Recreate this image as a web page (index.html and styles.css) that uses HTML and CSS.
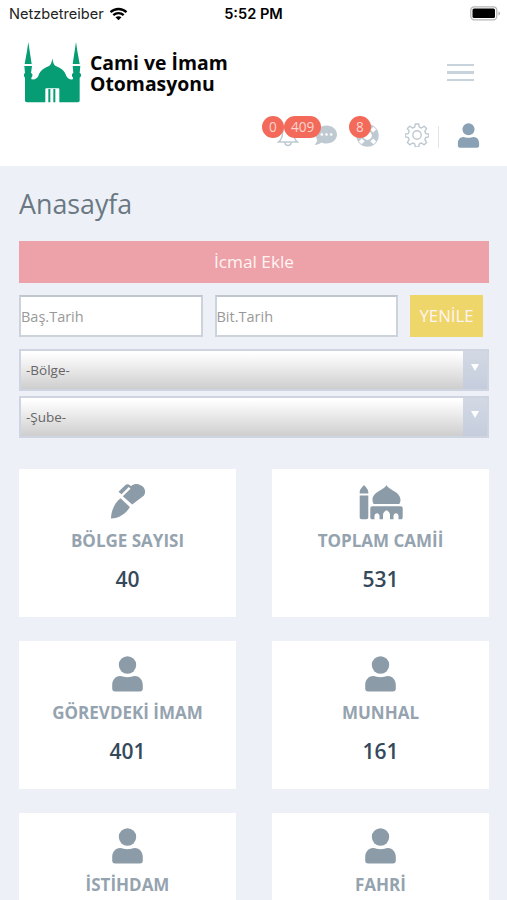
FILE: index.html
```html
<!DOCTYPE html>
<html lang="tr">
<head>
  <meta charset="UTF-8">
  <meta name="viewport" content="width=device-width, initial-scale=1.0">
  <title>Cami ve İmam Otomasyonu</title>
  <link rel="stylesheet" href="styles.css">
</head>
<body>
  <svg width="0" height="0" class="sprite">
    <symbol id="user" viewBox="0 0 31 36">
      <circle cx="15.5" cy="9" r="8.7"/>
      <path d="M8 20c3 0 4 1.300 7.500 1.300S20 20 23 20c4.500 0 7.800 4 7.800 9v3.500c0 2-1 3-3 3H3.200c-2 0-3-1-3-3V29c0-5 3.300-9 7.800-9z"/>
    </symbol>
  </svg>

  <header class="main-header">
    <div class="status-bar">
      <div class="carrier">
        <span>Netzbetreiber</span>
        <svg width="19" height="14" viewBox="0 0 19 14">
          <path d="M1.500 5.200C6 .9 13 .9 17.500 5.200M4.300 8.200c3-2.700 7.400-2.700 10.400 0" fill="none" stroke="#000" stroke-width="2.300"/>
          <path d="M6.500 10.300c1.800-1.500 4.200-1.500 6 0l-3 3z"/>
        </svg>
      </div>
      <span class="clock">5:52 PM</span>
      <svg class="battery" width="31" height="15" viewBox="0 0 31 15">
        <rect x=".8" y=".8" width="26" height="13" rx="3.500" fill="#fff" stroke="#b5b5b5" stroke-width="1.300"/>
        <rect x="2.500" y="2.600" width="22.500" height="9.500" rx="1.500"/>
        <path d="M28.500 5.200c2 .9 2 3.500 0 4.400z" fill="#aaa"/>
      </svg>
    </div>

    <div class="brand-row">
      <a class="brand">
        <svg width="57" height="61" viewBox="27 21 171 183" fill="#069d74">
          <path d="M40 21l4 27 6 39H29l7-39zM183 21l4 27 7 39h-21l6-39z"/>
          <path d="M28 93h23l-2 14-1 7 4 3v7l-3 4v5c10 2 17-3 21-10 5-17 19-24 32-30 6-3 8-10 10-23 2 13 4 20 10 23 14 6 27 13 32 30 4 7 11 12 20 10v-5l-3-4v-7l4-3-2-21h23l-2 21 4 3v7l-4 4v68c0 4-2 6-6 6h-55v-39c0-2-2-3-4-3H95c-2 0-4 1-4 3v39H36c-4 0-6-2-6-6v-68l-3-4v-7l3-3z"/>
          <path d="M100 162h6v40h-6zM115 162h6v40h-6z"/>
        </svg>
        <h1>Cami ve İmam<br>Otomasyonu</h1>
      </a>
      <div class="menu-toggler"><i></i><i></i><i></i></div>
    </div>

    <div class="top-menu">
      <div class="item bell">
        <svg width="22" height="23" viewBox="0 0 22 23" fill="none" stroke="#bec9d2" stroke-width="1.500">
          <path d="M1.500 18h19c-3-2.500-4-5-4-9 0-4-2-7-5.500-7S5.500 5 5.500 9c0 4-1 6.500-4 9zM8 18.500c0 4 6 4 6 0"/>
        </svg>
        <span class="badge">0</span>
      </div>
      <div class="item chat">
        <svg width="23" height="21" viewBox="0 0 23 21">
          <path d="M12.500.5C18.500.5 23 4.500 23 9.500s-4.500 9-10.500 9c-2 0-3.500-.3-5-1-2 1.500-4.500 2.500-7 2.500 1.500-1.500 2.500-3.500 2.700-5C2.300 13.300 2 11.500 2 9.500c0-5 4.500-9 10.500-9z" fill="#bec9d2"/>
          <g fill="#fff"><circle cx="7.800" cy="9.500" r="1.300"/><circle cx="12.500" cy="9.500" r="1.300"/><circle cx="17.200" cy="9.500" r="1.300"/></g>
        </svg>
        <span class="badge">409</span>
      </div>
      <div class="item support">
        <svg width="23" height="23" viewBox="0 0 23 23" fill="none">
          <circle cx="11.500" cy="11.500" r="7.800" stroke="#bec9d2" stroke-width="6.800"/>
          <path d="M4.200 4.200l3 3M15.800 15.800l3 3M18.800 4.200l-3 3M7.200 15.800l-3 3" stroke="#fff" stroke-width="4"/>
        </svg>
        <span class="badge">8</span>
      </div>
      <div class="item settings">
        <svg width="24" height="24" viewBox="0 0 24 24" fill="none" stroke="#bec9d2" stroke-width="1.400" stroke-linejoin="round">
          <path d="M10.300 1h3.400l.6 3.100 2.200.9 2.700-1.800 2.400 2.400-1.800 2.700.9 2.200 3.100.6v2.800l-3.100.6-.9 2.200 1.800 2.700-2.400 2.400-2.700-1.800-2.200.9-.6 3.100h-3.400l-.6-3.100-2.200-.9-2.700 1.800-2.400-2.400 1.800-2.700-.9-2.200-3.100-.6v-2.800l3.100-.6.9-2.200-1.800-2.700 2.400-2.400L7.500 5l2.200-.9z"/>
          <circle cx="12" cy="12" r="4.200"/>
        </svg>
      </div>
      <span class="separator"></span>
      <svg class="profile" width="23" height="25"><use href="#user"/></svg>
    </div>
  </header>

  <main class="page">
    <h2>Anasayfa</h2>
    <button class="btn btn-add">İcmal Ekle</button>

    <div class="dates">
      <input type="text" placeholder="Baş.Tarih">
      <input type="text" placeholder="Bit.Tarih">
      <button class="btn btn-refresh">YENİLE</button>
    </div>

    <div class="select"><span>-Bölge-</span><i class="arrow"></i></div>
    <div class="select"><span>-Şube-</span><i class="arrow"></i></div>

    <section class="cards">
      <div class="card">
        <svg width="36" height="36" viewBox="0 0 36 36">
          <path d="M10.500 14.300l9.300 8.600C17 29 9 34.500 1 34.500 1 27 5 18 10.500 14.300z"/>
          <path d="M12.800 12.200l7.700-7.400-1.700-1.700-7.300 7.200-3-2.500 6.700-6.500c1.500-1.300 3-1.400 4.500-.2l1.300 1.200c2.500-2.600 6-3 9-1.300 4.500 1.500 6.500 6 4 10.500L22.200 20.600z"/>
        </svg>
        <h3>BÖLGE SAYISI</h3>
        <p>40</p>
      </div>
      <div class="card">
        <svg width="44" height="36" viewBox="0 0 44 36">
          <path d="M5 1c1.500 2 4.300 4 4.300 7.200v1.300H.7V8.200C.7 5 3.500 3 5 1zM.7 11.500h8.600V33c0 1.500-.7 2.200-2 2.200H2.700c-1.300 0-2-.7-2-2.200z"/>
          <path d="M27.500 1c2 5 14 6.500 14 15 0 1.500-.5 3-1.300 4H14.800c-.8-1-1.300-2.500-1.300-4 0-8.500 12-10 14-15z"/>
          <path d="M13.500 22.200h28c1.500 0 2.200.8 2.200 2.200v8.800c0 1.400-.7 2-2.200 2h-2v-3c0-4-5-4-5 0v3h-3.500v-4c0-2.500-1.500-4-3.500-5-2 1-3.500 2.500-3.500 5v4h-3.500v-3c0-4-5-4-5 0v3h-2c-1.500 0-2.200-.6-2.200-2v-8.800c0-1.400.7-2.200 2.200-2.200z"/>
        </svg>
        <h3>TOPLAM CAMİİ</h3>
        <p>531</p>
      </div>
      <div class="card">
        <svg width="31" height="36"><use href="#user"/></svg>
        <h3>GÖREVDEKİ İMAM</h3>
        <p>401</p>
      </div>
      <div class="card">
        <svg width="31" height="36"><use href="#user"/></svg>
        <h3>MUNHAL</h3>
        <p>161</p>
      </div>
      <div class="card">
        <svg width="31" height="36"><use href="#user"/></svg>
        <h3>İSTİHDAM</h3>
      </div>
      <div class="card">
        <svg width="31" height="36"><use href="#user"/></svg>
        <h3>FAHRİ</h3>
      </div>
    </section>
  </main>
</body>
</html>
```
FILE: styles.css
```css
* {
  box-sizing: border-box;
}

body {
  margin: 0;
  height: 900px;
  overflow: hidden;
  background-color: #edf1f7;
  font-family: "Open Sans", sans-serif;
}

h1, h2, h3, p {
  margin: 0;
}

svg {
  display: block;
  flex-shrink: 0;
}

.sprite {
  position: absolute;
}

.main-header {
  height: 166px;
  background-color: #fff;
}

.status-bar {
  display: grid;
  grid-template-columns: 1fr auto 1fr;
  align-items: center;
  height: 27px;
  padding: 0 6px 0 9px;
  font-family: Inter, sans-serif;
  font-size: 14.6px;
  color: #222;
}

.carrier {
  display: flex;
  align-items: center;
  gap: 5px;
}

.clock {
  margin-left: -3px;
  font-weight: 600;
  color: #000;
}

.battery {
  justify-self: end;
}

.brand-row {
  display: flex;
  justify-content: space-between;
  align-items: center;
  height: 61px;
  margin-top: 15px;
  padding: 0 33px 0 24px;
}

.brand {
  display: flex;
  align-items: center;
  gap: 9px;
}

.brand h1 {
  padding-top: 1px;
  font-size: 19.4px;
  font-weight: 700;
  line-height: 21px;
  color: #050505;
}

.menu-toggler {
  display: flex;
  flex-direction: column;
  gap: 5px;
  width: 27px;
}

.menu-toggler i {
  height: 2.5px;
  background-color: #c7d2da;
}

.top-menu {
  display: flex;
  align-items: center;
  height: 26px;
  margin-top: 19px;
  padding-left: 277px;
}

.item {
  position: relative;
}

.chat {
  margin-left: 15px;
}

.support {
  margin-left: 19px;
}

.settings {
  margin-left: 26px;
}

.badge {
  position: absolute;
  top: -8px;
  left: -15px;
  min-width: 22px;
  height: 22px;
  padding: 0 7px;
  border-radius: 11px;
  background-color: #f36a5a;
  color: #fbd5cf;
  font-size: 13.6px;
  line-height: 21px;
  text-align: center;
}

.chat .badge {
  top: -9px;
  left: -30px;
}

.support .badge {
  left: -7px;
}

.separator {
  width: 1px;
  height: 22px;
  margin: 3px 18px 0 9px;
  background-color: #e0e5ea;
}

.profile {
  fill: #8aa0b5;
}

.page {
  padding: 19px 18px 0 19px;
}

.page h2 {
  margin-bottom: 18px;
  font-size: 26.8px;
  font-weight: 400;
  line-height: 38px;
  color: #697882;
}

.btn {
  height: 42px;
  padding: 0 0 1px;
  border: 0;
  font-family: inherit;
  font-size: 17.2px;
  color: #fff5f2;
}

.btn-add {
  display: block;
  width: 100%;
  background-color: #eda1a9;
}

.btn-refresh {
  width: 73px;
  font-size: 16.8px;
  background-color: #efd66b;
}

.dates {
  display: flex;
  gap: 12px;
  margin: 12px 0;
}

.dates input {
  width: 183.5px;
  height: 42px;
  padding: 0;
  border: 2px solid #cdd3db;
  border-top-color: #c0c6cd;
  border-radius: 0;
  background-color: #fff;
  font-family: inherit;
  font-size: 14.5px;
}

.dates input::placeholder {
  color: #999;
}

.select {
  display: flex;
  justify-content: space-between;
  align-items: center;
  height: 42px;
  margin-bottom: 5px;
  padding-left: 5px;
  border: 2px solid #cfd5e0;
  background: linear-gradient(#fff 5%, #cecece);
  font-size: 13.5px;
  color: #666;
}

.arrow {
  display: flex;
  justify-content: center;
  width: 24px;
  height: 100%;
  padding-top: 13px;
  background: linear-gradient(#d3d9e4, #c5cddd);
}

.arrow::before {
  content: "";
  width: 0;
  height: 0;
  border: 4px solid transparent;
  border-top: 7px solid #fff;
  border-bottom: 0;
}

.cards {
  display: grid;
  grid-template-columns: 217px 217px;
  gap: 24px 36px;
  margin-top: 31px;
}

.card {
  display: flex;
  flex-direction: column;
  align-items: center;
  height: 148px;
  padding-top: 15px;
  background-color: #fff;
}

.card svg {
  fill: #8c9ba8;
}

.card h3 {
  margin-top: 9px;
  font-size: 17px;
  font-weight: 700;
  line-height: 24px;
  color: #95a3af;
}

.card p {
  margin-top: 11px;
  font-size: 21px;
  font-weight: 600;
  line-height: 30px;
  color: #35495a;
}
```
